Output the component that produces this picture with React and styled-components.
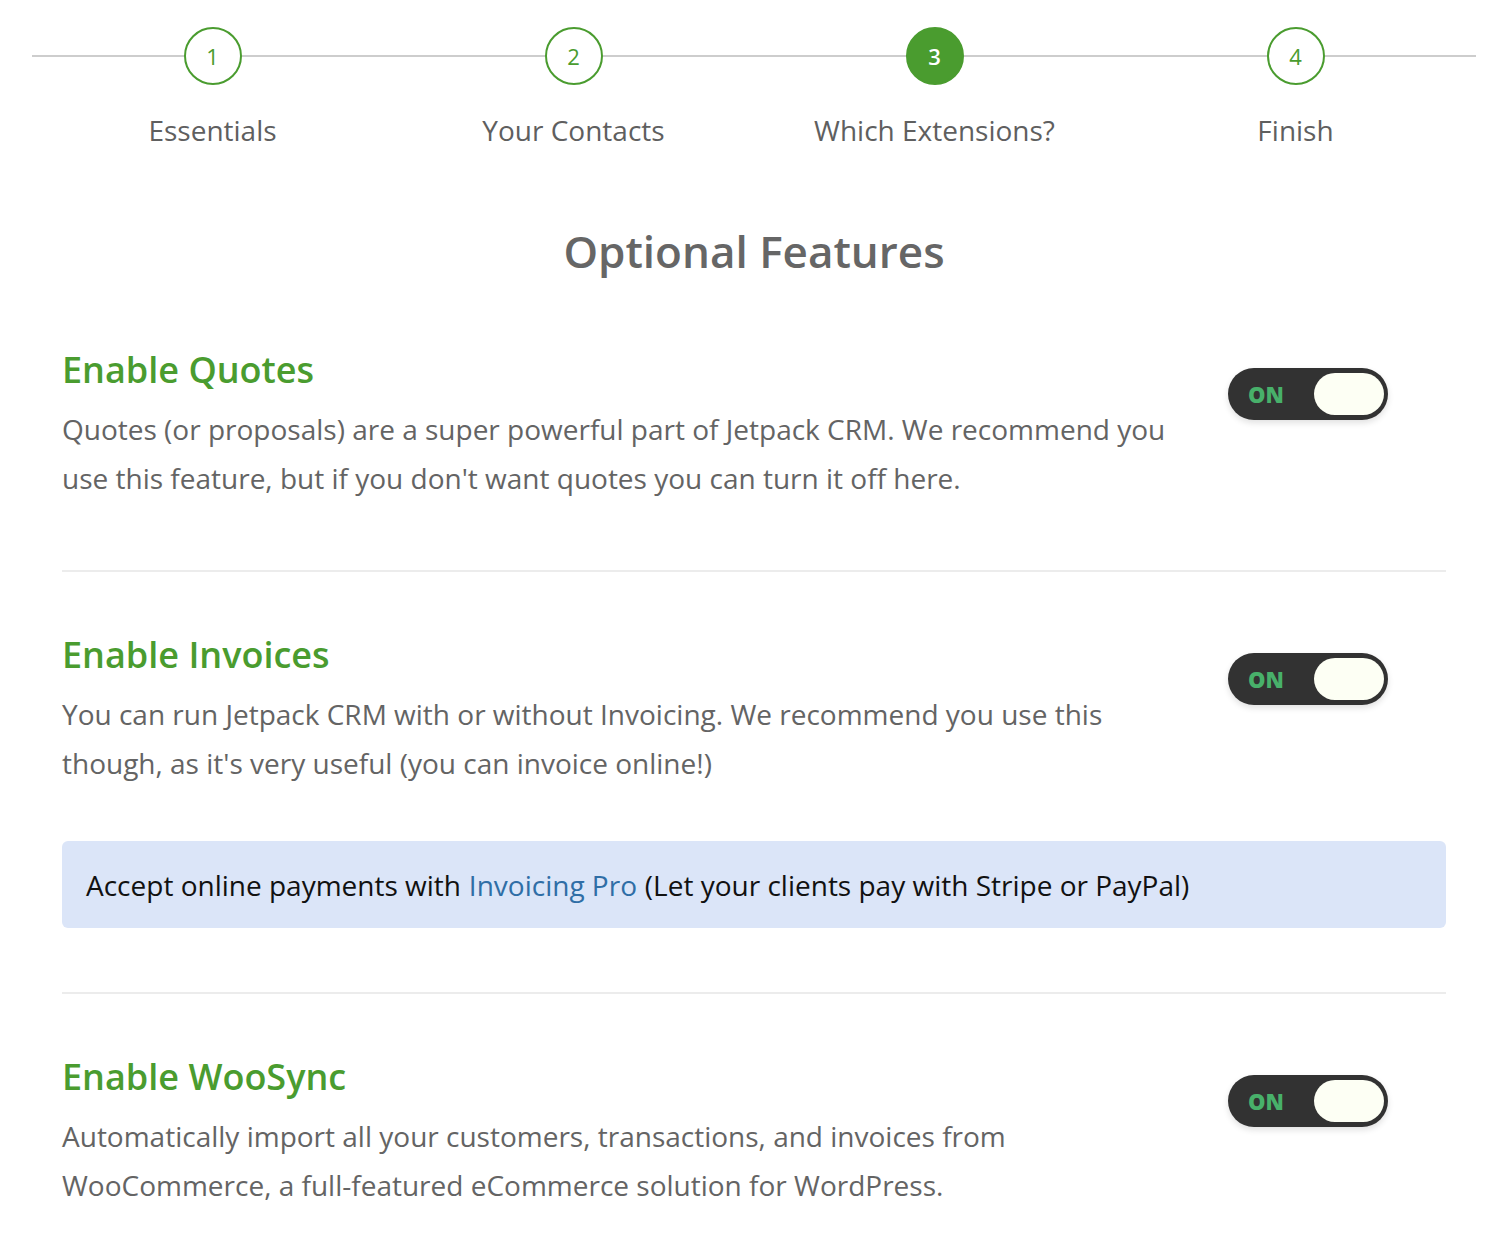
import React from "react";
import styled, { createGlobalStyle } from "styled-components";

const Global = createGlobalStyle`
  html, body { margin: 0; padding: 0; background: #fff; }
  body { font-family: "Open Sans", "Noto Sans", sans-serif; -webkit-font-smoothing: antialiased; }
`;

const Page = styled.div`
  width: 1496px;
  padding-bottom: 40px;
`;

const Stepper = styled.div`
  display: grid;
  grid-template-columns: repeat(4, 361px);
  margin: 27px 0 0 32px;
`;

const Step = styled.div`
  display: flex;
  flex-direction: column;
  align-items: center;
`;

const StepTrack = styled.div`
  display: flex;
  align-items: center;
  width: 100%;
`;

const TrackLine = styled.div`
  flex: 1;
  height: 2px;
  background: #cdcdcd;
`;

const Circle = styled.div`
  box-sizing: border-box;
  width: 58px;
  height: 58px;
  border-radius: 50%;
  border: 2px solid #4a9c2f;
  background: ${(p) => (p.$active ? "#4a9c2f" : "#fff")};
  color: ${(p) => (p.$active ? "#fff" : "#4a9c2f")};
  display: flex;
  align-items: center;
  justify-content: center;
  font-size: 22px;
  line-height: 1;
  font-weight: ${(p) => (p.$active ? 600 : 400)};
`;

const StepLabel = styled.div`
  margin-top: 26px;
  font-size: 28px;
  line-height: 38px;
  color: #5f5f5f;
`;

const Content = styled.div`
  margin: 76px 50px 0 62px;
`;

const Title = styled.h1`
  margin: 0 0 70px;
  text-align: center;
  font-size: 44px;
  line-height: 53px;
  font-weight: 600;
  color: #666;
`;

const Section = styled.section`
  display: grid;
  grid-template-columns: 1fr auto;
  column-gap: 40px;
`;

const TextCol = styled.div`
  max-width: 1122px;
`;

const Heading = styled.h2`
  margin: 0;
  font-size: 36px;
  line-height: 43px;
  font-weight: 600;
  color: #4a9c2f;
`;

const Desc = styled.p`
  margin: 14px 0 0;
  font-size: 28px;
  line-height: 49px;
  color: #646464;
`;

const Toggle = styled.div`
  box-sizing: border-box;
  margin: 20px 58px 0 0;
  width: 160px;
  height: 52px;
  border-radius: 26px;
  background: #323232;
  display: flex;
  align-items: center;
  justify-content: space-between;
  padding: 0 4px 0 20px;
  box-shadow: 0 3px 6px rgba(0, 0, 0, 0.12);
`;

const ToggleText = styled.span`
  font-family: "Open Sans", sans-serif;
  font-weight: 800;
  font-size: 22px;
  color: #48b06a;
`;

const Knob = styled.span`
  width: 70px;
  height: 42px;
  border-radius: 21px;
  background: #fdfff4;
`;

const Divider = styled.hr`
  border: 0;
  height: 2px;
  background: #ececec;
  margin: ${(p) => p.$margin};
`;

const Notice = styled.div`
  margin-top: 53px;
  height: 87px;
  border-radius: 6px;
  background: #dbe5f8;
  display: flex;
  align-items: center;
  padding: 0 24px;
  font-size: 28px;
  color: #111;
`;

const Link = styled.a`
  color: #2f6ea6;
  text-decoration: none;
  margin: 0 0.28em;
`;

function Feature({ title, children }) {
  return (
    <Section>
      <TextCol>
        <Heading>{title}</Heading>
        <Desc>{children}</Desc>
      </TextCol>
      <Toggle>
        <ToggleText>ON</ToggleText>
        <Knob />
      </Toggle>
    </Section>
  );
}

const steps = ["Essentials", "Your Contacts", "Which Extensions?", "Finish"];

export default function App() {
  return (
    <Page>
      <Global />
      <Stepper>
        {steps.map((s, i) => (
          <Step key={s}>
            <StepTrack>
              <TrackLine />
              <Circle $active={i === 2}>{i + 1}</Circle>
              <TrackLine />
            </StepTrack>
            <StepLabel>{s}</StepLabel>
          </Step>
        ))}
      </Stepper>
      <Content>
        <Title>Optional Features</Title>
        <Feature title="Enable Quotes">
          Quotes (or proposals) are a super powerful part of Jetpack CRM. We recommend you use this feature, but if you don't want quotes you can turn it off here.
        </Feature>
        <Divider $margin="67px 0 61px" />
        <Feature title="Enable Invoices">
          You can run Jetpack CRM with or without Invoicing. We recommend you use this though, as it's very useful (you can invoice online!)
        </Feature>
        <Notice>
          Accept online payments with<Link href="#">Invoicing Pro</Link>(Let your clients pay with Stripe or PayPal)
        </Notice>
        <Divider $margin="64px 0 61px" />
        <Feature title="Enable WooSync">
          Automatically import all your customers, transactions, and invoices from WooCommerce, a full-featured eCommerce solution for WordPress.
        </Feature>
      </Content>
    </Page>
  );
}
